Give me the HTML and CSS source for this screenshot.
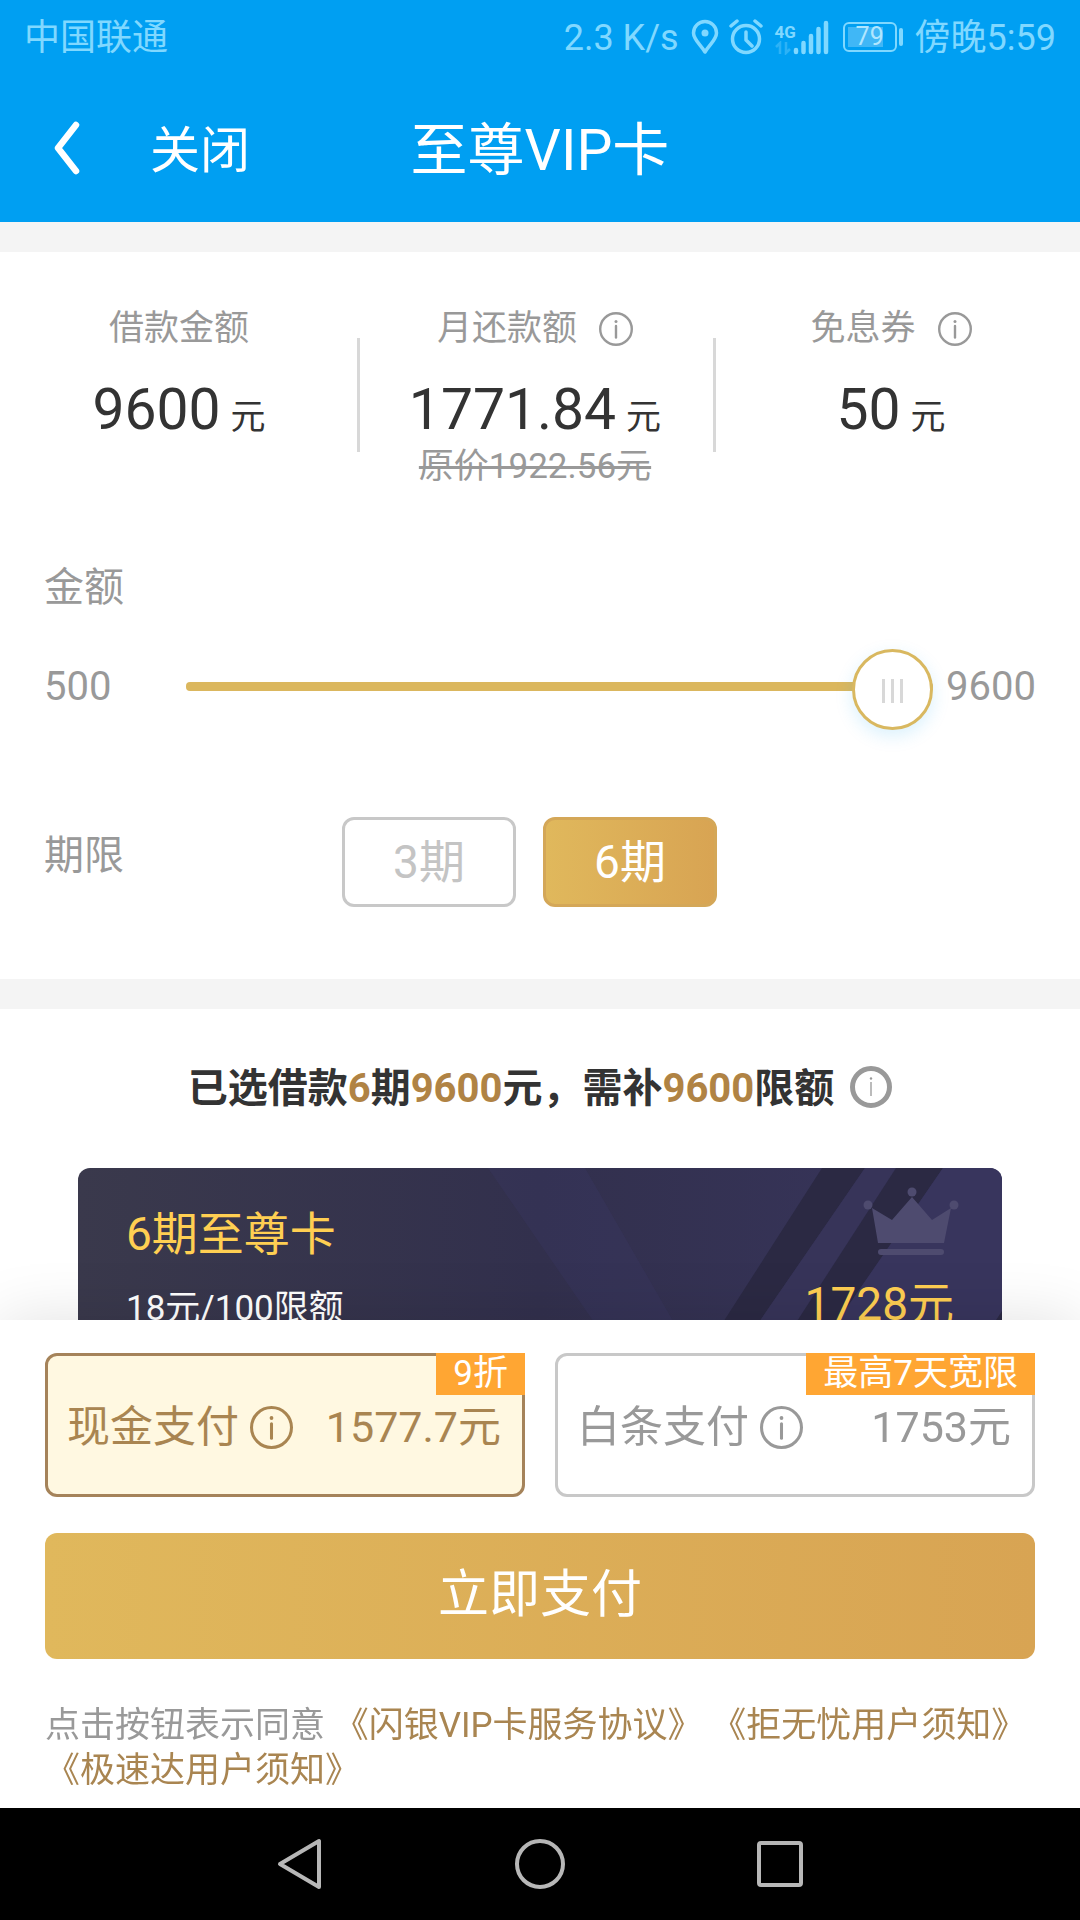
FILE: index.html
```html
<!DOCTYPE html>
<html lang="zh-CN">
<head>
<meta charset="utf-8">
<meta name="viewport" content="width=device-width">
<title>至尊VIP卡</title>
<link rel="stylesheet" href="styles.css">
</head>
<body>
<svg class="sprite" aria-hidden="true">
  <symbol id="info" viewBox="0 0 34 34">
    <circle cx="17" cy="17" r="15.8" fill="none" stroke="currentColor" stroke-width="2.4"/>
    <circle cx="17" cy="9.500" r="1.500" fill="currentColor"/>
    <path d="M17 14v11.500" stroke="currentColor" stroke-width="2.4" stroke-linecap="round"/>
  </symbol>
</svg>
<div class="screen">
  <header class="header">
    <div class="status">
      <span>中国联通</span>
      <div class="status-right">
        <span>2.3 K/s</span>
        <svg class="pin" width="28" height="36" viewBox="0 0 28 36"><path d="M14 33C9 25 2.500 20.500 2.500 14A11.500 11.500 0 0 1 25.500 14C25.500 20.500 19 25 14 33Z" fill="none" stroke="currentColor" stroke-width="3.500" stroke-linejoin="round"/><circle cx="14" cy="14" r="3.500" fill="currentColor"/></svg>
        <svg class="alarm" width="34" height="36" viewBox="0 0 34 36"><circle cx="17" cy="20" r="13.500" fill="none" stroke="currentColor" stroke-width="3.500"/><path d="M17 13v8l6 6M2 7l6-5M32 7l-6-5" fill="none" stroke="currentColor" stroke-width="3.500" stroke-linecap="round" stroke-linejoin="round"/></svg>
        <div class="cell">
          <div class="cell-type">
            <b>4G</b>
            <svg width="16" height="14" viewBox="0 0 16 14"><path d="M5 13V2L1 6M11 1v11l4-4" fill="none" stroke="currentColor" stroke-width="2.500" opacity=".35"/></svg>
          </div>
          <svg width="36" height="36" viewBox="0 0 36 36" stroke="currentColor" stroke-width="4.500" stroke-linecap="round"><path d="M3 33v-2M10.500 33V24M18 33V17M25.500 33V10M33 33V4"/></svg>
        </div>
        <div class="battery"><span class="battery-level">79</span></div>
        <span>傍晚5:59</span>
      </div>
    </div>
    <nav class="titlebar">
      <div class="titlebar-left">
        <button class="back" type="button" aria-label="返回"><svg width="28" height="56" viewBox="0 0 28 56"><path d="M24 5L6 28L24 51" fill="none" stroke="#fff" stroke-width="6.500" stroke-linecap="round" stroke-linejoin="round"/></svg></button>
        <button class="close" type="button">关闭</button>
      </div>
      <h1 class="title">至尊VIP卡</h1>
    </nav>
  </header>

  <main class="content">
    <section class="panel loan">
      <div class="stats">
        <div class="stat">
          <div class="stat-label">借款金额</div>
          <div class="stat-value">9600<small>元</small></div>
        </div>
        <div class="stat">
          <div class="stat-label">月还款额<svg class="icon"><use href="#info"/></svg></div>
          <div class="stat-value">1771.84<small>元</small></div>
          <del class="stat-old">原价1922.56元</del>
        </div>
        <div class="stat">
          <div class="stat-label">免息券<svg class="icon"><use href="#info"/></svg></div>
          <div class="stat-value">50<small>元</small></div>
        </div>
      </div>

      <label class="field-label" for="amount">金额</label>
      <div class="amount">
        <span class="amount-min">500</span>
        <input class="slider" id="amount" type="range" min="500" max="9600" value="9600">
        <span>9600</span>
      </div>

      <div class="term">
        <span class="field-label">期限</span>
        <div class="term-options">
          <button class="chip" type="button">3期</button>
          <button class="chip chip-on" type="button">6期</button>
        </div>
      </div>
    </section>

    <section class="panel plan">
      <h2 class="plan-title"><span>已选借款<em>6</em>期<em>9600</em>元，需补<em>9600</em>限额</span><svg class="icon icon-plan" viewBox="0 0 42 42"><circle cx="21" cy="21" r="18.500" fill="none" stroke="#999" stroke-width="5"/><circle cx="21" cy="12.500" r="1.200" fill="#999"/><path d="M21 16v14" stroke="#aaa" stroke-width="1.600"/></svg></h2>
      <article class="card">
        <svg class="card-art" viewBox="0 0 924 240" preserveAspectRatio="xMaxYMin slice" aria-hidden="true">
          <path d="M410 0H507L645 240H575Z" fill="#3a3766" opacity=".3"/>
          <path d="M744 0H787L622 240H590Z" fill="#2b2943"/>
          <path d="M787 0H818L663 240H622Z" fill="#373459"/>
          <path d="M818 0H865L700 240H663Z" fill="#2b2943"/>
          <path d="M865 0H924V240H700Z" fill="#38355d"/>
          <path d="M924 143V240H860Z" fill="#2b2943"/>
          <g fill="#4e4b6f"><circle cx="790" cy="37" r="4.500"/><circle cx="834" cy="24" r="4.500"/><circle cx="876" cy="37" r="4.500"/><path d="M794 40L814 52L834 29L854 52L873 40L866 75H800Z"/><rect x="800" y="81" width="66" height="6" rx="3"/></g>
        </svg>
        <h3 class="card-title">6期至尊卡</h3>
        <div class="card-row"><span class="card-rate">18元/100限额</span><span class="card-price">1728元</span></div>
      </article>
    </section>
  </main>

  <footer class="checkout">
    <div class="methods">
      <button class="method method-on" type="button">
        <span class="badge">9折</span>
        <span class="method-name">现金支付<svg class="icon icon-lg"><use href="#info"/></svg></span>
        <span>1577.7元</span>
      </button>
      <button class="method" type="button">
        <span class="badge">最高7天宽限</span>
        <span class="method-name">白条支付<svg class="icon icon-lg"><use href="#info"/></svg></span>
        <span>1753元</span>
      </button>
    </div>
    <button class="pay" type="button">立即支付</button>
    <p class="terms">点击按钮表示同意 <a href="#vip">《闪银VIP卡服务协议》</a> <a href="#refuse">《拒无忧用户须知》</a> <a href="#fast">《极速达用户须知》</a></p>
  </footer>

  <nav class="navbar">
    <button type="button" aria-label="返回"><svg width="52" height="56" viewBox="0 0 52 56"><path d="M45 5V51L6 28Z"/></svg></button>
    <button type="button" aria-label="主页"><svg width="52" height="56" viewBox="0 0 52 56"><circle cx="26" cy="28" r="23"/></svg></button>
    <button type="button" aria-label="最近任务"><svg width="52" height="56" viewBox="0 0 52 56"><rect x="5" y="7" width="42" height="42" rx="2"/></svg></button>
  </nav>
</div>
</body>
</html>
```
FILE: styles.css
```css
* { box-sizing: border-box; }

body {
  margin: 0;
  background: #fff;
  color: #999;
  font-family: Roboto, "Noto Sans CJK SC", sans-serif;
}

button {
  padding: 0;
  border: 0;
  background: none;
  color: inherit;
  font: inherit;
}

svg { display: block; flex: none; }
h1, h2, h3, p { margin: 0; font-weight: 400; }

.sprite { position: absolute; width: 0; height: 0; }
.icon { width: 34px; height: 34px; }
.icon-lg { width: 43px; height: 43px; }
.icon-plan { width: 42px; height: 42px; margin-bottom: 4px; }

.screen {
  display: flex;
  flex-direction: column;
  height: 100vh;
}

/* Header */
.header { background: #009ff2; color: #fff; }

.status {
  display: flex;
  align-items: center;
  justify-content: space-between;
  height: 74px;
  padding: 0 24px;
  color: #80d8ff;
  font-size: 36px;
  line-height: 40px;
}

.status span { padding-top: 2px; }
.status-right { display: flex; align-items: center; }
.pin { margin-left: 12px; }
.alarm { margin-left: 10px; }

.cell { display: flex; align-items: flex-end; margin-left: 12px; }
.cell-type { display: flex; flex-direction: column; width: 18px; }
.cell-type b { font-size: 17px; line-height: 18px; }

.battery {
  position: relative;
  width: 54px;
  height: 30px;
  margin: 0 18px 0 14px;
  padding: 3px 12px 3px 3px;
  border: 2px solid #80d8ff;
  border-radius: 6px;
}

.battery::after {
  content: "";
  position: absolute;
  top: 4px;
  right: -8px;
  width: 4px;
  height: 18px;
  border-radius: 2px;
  background: #80d8ff;
}

.status .battery-level {
  display: block;
  height: 20px;
  padding: 0 0 0 8px;
  background: #40b7f6;
  color: #b0e6ff;
  font-size: 25px;
  line-height: 20px;
}

.titlebar {
  display: grid;
  grid-template-columns: 1fr auto 1fr;
  align-items: center;
  height: 148px;
}

.titlebar-left { display: flex; align-items: center; gap: 70px; padding-left: 52px; }
.close { padding-top: 6px; font-size: 50px; line-height: 60px; }
.title { padding-top: 6px; font-size: 57px; line-height: 72px; }

/* Scrolling content */
.content {
  flex: 1;
  min-height: 0;
  overflow-y: auto;
  scrollbar-width: none;
  background: #f4f4f4;
}

.panel { margin-top: 30px; background: #fff; }
.loan { padding-bottom: 72px; }

.stats {
  display: grid;
  grid-template-columns: repeat(3, 1fr);
  padding: 52px 11px 0 1px;
}

.stat {
  position: relative;
  display: flex;
  flex-direction: column;
  align-items: center;
}

.stat + .stat::before {
  content: "";
  position: absolute;
  top: 34px;
  left: 0;
  width: 3px;
  height: 114px;
  background: #d8d8d8;
}

.stat-label {
  display: flex;
  align-items: center;
  gap: 22px;
  height: 50px;
  font-size: 35px;
  line-height: 40px;
}

.stat-value {
  margin-top: 24px;
  color: #333;
  font-size: 57px;
  line-height: 64px;
}

.stat-value small { margin-left: 10px; font-size: 35px; }
.stat-old { font-size: 35px; line-height: 34px; }

.field-label { display: block; font-size: 40px; line-height: 60px; }
.loan > .field-label { margin-top: 74px; padding-left: 44px; }

.amount {
  display: flex;
  align-items: center;
  margin-top: 28px;
  padding: 0 44px;
  font-size: 40px;
  line-height: 81px;
}

.amount-min { width: 142px; }

.slider {
  flex: 1;
  height: 81px;
  margin: 0 13px 0 0;
  appearance: none;
  background: none;
}

.slider::-webkit-slider-runnable-track {
  height: 9px;
  border-radius: 4px;
  background: #dbb75e;
}

.slider::-webkit-slider-thumb {
  width: 81px;
  height: 81px;
  margin-top: -33px;
  appearance: none;
  border: 3px solid #d9b860;
  border-radius: 50%;
  background:
    linear-gradient(#d8d8d8, #d8d8d8) 27px 27px / 3px 24px no-repeat,
    linear-gradient(#d8d8d8, #d8d8d8) 36px 27px / 3px 24px no-repeat,
    linear-gradient(#d8d8d8, #d8d8d8) 45px 27px / 3px 24px no-repeat,
    #fff;
  box-shadow: 0 6px 18px rgba(0, 159, 242, .15);
}

.term {
  display: flex;
  margin-top: 90px;
  padding: 0 44px;
}

.term > .field-label { width: 298px; padding-top: 9px; }
.term-options { display: flex; gap: 27px; }

.chip {
  width: 174px;
  height: 90px;
  border: 3px solid #c8c8c8;
  border-radius: 12px;
  color: #c4c4c4;
  font-size: 46px;
  line-height: 80px;
}

.chip-on {
  border-color: #d4a758;
  background: linear-gradient(90deg, #e0b85c, #d8a453);
  color: #fff;
}

.plan { padding: 50px 78px 0; }

.plan-title {
  display: flex;
  align-items: center;
  justify-content: center;
  gap: 16px;
  color: #333;
  font-size: 40px;
  font-weight: 700;
  line-height: 60px;
}

.plan-title em { color: #b08344; font-style: normal; }

.card {
  position: relative;
  height: 420px;
  margin-top: 49px;
  padding: 34px 48px;
  overflow: hidden;
  border-radius: 12px;
  background: linear-gradient(90deg, #3a394c, #32304d 50%, #38355d);
  color: #ffcf52;
}

.card-art { position: absolute; top: 0; right: 0; width: 100%; height: 240px; }
.card-title { position: relative; font-size: 46px; line-height: 64px; }

.card-row {
  position: relative;
  display: flex;
  align-items: baseline;
  justify-content: space-between;
  margin-top: 6px;
  line-height: 64px;
}

.card-rate { color: #fff; font-size: 35px; }
.card-price { font-size: 46px; }

/* Checkout */
.checkout {
  position: relative;
  padding: 33px 45px 15px;
  background: #fff;
  box-shadow: 0 0 60px rgba(0, 0, 0, .12);
}

.methods { display: grid; grid-template-columns: 1fr 1fr; gap: 30px; }

.method {
  position: relative;
  display: flex;
  align-items: center;
  justify-content: space-between;
  height: 144px;
  padding: 4px 21px 0 19px;
  border: 3px solid #c8c8c8;
  border-radius: 12px;
  font-size: 43px;
  line-height: 60px;
}

.method-on { border-color: #a5835a; background: #fff8e1; color: #a98551; }
.method-name { display: flex; align-items: center; gap: 11px; }

.badge {
  position: absolute;
  top: -3px;
  right: -3px;
  padding: 0 17px;
  background: #ffa633;
  color: #fff;
  font-size: 35px;
  line-height: 42px;
}

.pay {
  display: block;
  width: 100%;
  height: 126px;
  margin-top: 36px;
  padding-bottom: 12px;
  border-radius: 12px;
  background: linear-gradient(90deg, #e0b85c, #d8a453);
  color: #fff;
  font-size: 51px;
}

.terms {
  margin-top: 44px;
  font-size: 35px;
  line-height: 45px;
}

.terms a { color: #a98551; text-decoration: none; }

/* System navigation */
.navbar {
  display: flex;
  justify-content: center;
  height: 112px;
  background: #000;
}

.navbar button { display: grid; place-items: center; width: 240px; }
.navbar svg { fill: none; stroke: #b8b8b8; stroke-width: 4; stroke-linejoin: round; }
```
